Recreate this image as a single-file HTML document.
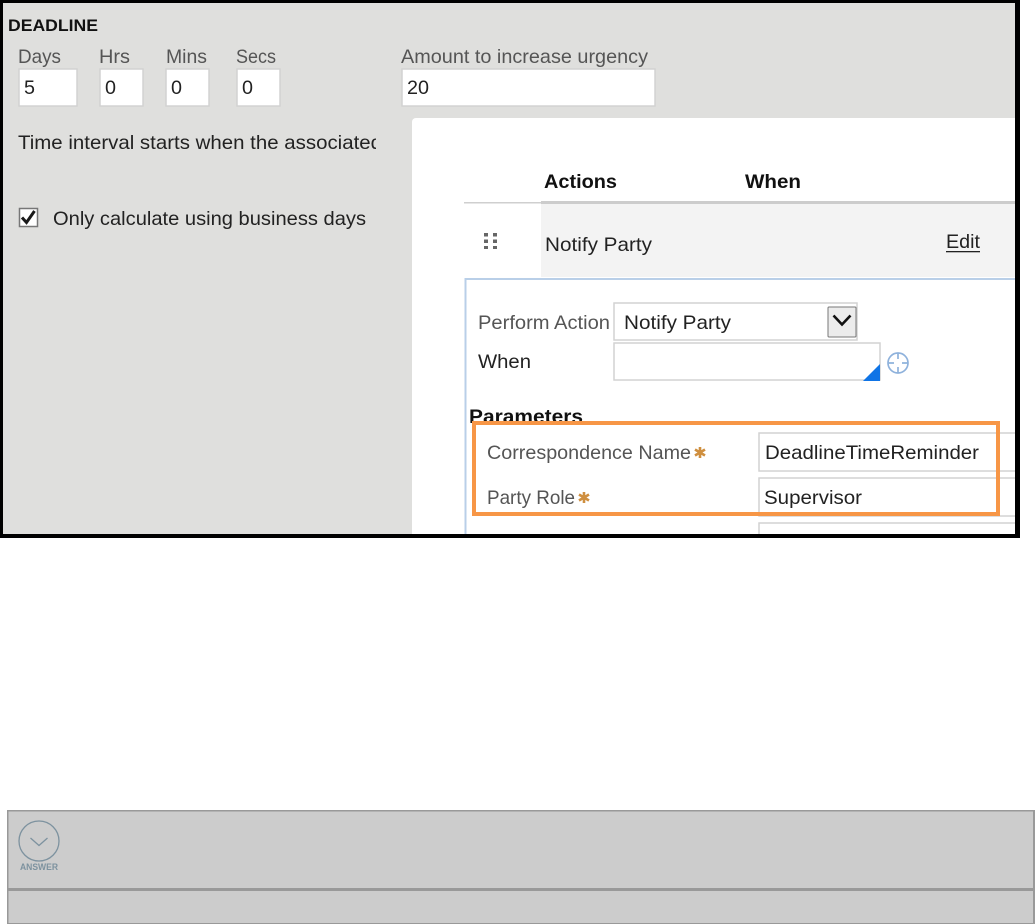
<!DOCTYPE html>
<html><head><meta charset="utf-8"><style>
html,body{margin:0;padding:0;background:#fff;width:1035px;height:924px;overflow:hidden}
svg{display:block}
text{font-family:"Liberation Sans",sans-serif;font-size:19.5px;fill:#333}
.d{fill:#222}
.b{font-weight:bold;fill:#111;font-size:19px}
.l{fill:#555}
.soft{filter:blur(.35px)}
</style></head><body>
<svg width="1035" height="924" viewBox="0 0 1035 924" xmlns="http://www.w3.org/2000/svg">
<defs><clipPath id="c"><rect x="3" y="3" width="1012" height="531"/></clipPath></defs>
<rect x="0" y="0" width="1020" height="538" fill="#000"/>
<rect x="3" y="3" width="1012" height="531" fill="#dfdfdd"/>
<g clip-path="url(#c)">
<g class="soft">
<text x="8" y="31" class="b" style="font-size:17px" textLength="90" lengthAdjust="spacingAndGlyphs">DEADLINE</text>
<text x="18" y="63" class="l" textLength="43" lengthAdjust="spacingAndGlyphs">Days</text>
<text x="99" y="63" class="l" textLength="31" lengthAdjust="spacingAndGlyphs">Hrs</text>
<text x="166" y="63" class="l" textLength="41" lengthAdjust="spacingAndGlyphs">Mins</text>
<text x="236" y="63" class="l" textLength="40" lengthAdjust="spacingAndGlyphs">Secs</text>
<text x="401" y="63" class="l" textLength="247" lengthAdjust="spacingAndGlyphs">Amount to increase urgency</text>
<g fill="#fff" stroke="#d2d2d2" stroke-width="1.5">
<rect x="19" y="69" width="58" height="37"/>
<rect x="100" y="69" width="43" height="37"/>
<rect x="166" y="69" width="43" height="37"/>
<rect x="237" y="69" width="43" height="37"/>
<rect x="402" y="69" width="253" height="37"/>
</g>
<text x="24" y="94" class="d" textLength="11" lengthAdjust="spacingAndGlyphs">5</text>
<text x="105" y="94" class="d" textLength="11" lengthAdjust="spacingAndGlyphs">0</text>
<text x="171" y="94" class="d" textLength="11" lengthAdjust="spacingAndGlyphs">0</text>
<text x="242" y="94" class="d" textLength="11" lengthAdjust="spacingAndGlyphs">0</text>
<text x="407" y="94" class="d" textLength="22" lengthAdjust="spacingAndGlyphs">20</text>
<svg x="18" y="130" width="358" height="30"><text x="0" y="19" class="d" textLength="364" lengthAdjust="spacingAndGlyphs">Time interval starts when the associated</text></svg>
<rect x="19.5" y="208.500" width="18" height="18" fill="#fff" stroke="#777" stroke-width="1.500"/>
<path d="M22 217.500l4.500 5 8-11.500" fill="none" stroke="#1a1a1a" stroke-width="3"/>
<text x="53" y="225" class="d" textLength="313" lengthAdjust="spacingAndGlyphs">Only calculate using business days</text>
<path d="M412 122a4 4 0 0 1 4-4H1015V534H412Z" fill="#fff"/>
<rect x="464" y="202" width="77" height="1.500" fill="#cfcfcf"/>
<rect x="541" y="203" width="474" height="74" fill="#f3f3f3"/>
<rect x="541" y="201" width="474" height="3" fill="#cccccc"/>
<text x="544" y="188" class="b" textLength="73" lengthAdjust="spacingAndGlyphs">Actions</text>
<text x="745" y="188" class="b" textLength="56" lengthAdjust="spacingAndGlyphs">When</text>
<g fill="#666"><rect x="484" y="233" width="4" height="3.500"/><rect x="493" y="233" width="4" height="3.500"/><rect x="484" y="239.500" width="4" height="3.500"/><rect x="493" y="239.500" width="4" height="3.500"/><rect x="484" y="246" width="4" height="3"/><rect x="493" y="246" width="4" height="3"/></g>
<text x="545" y="251" class="d" textLength="107" lengthAdjust="spacingAndGlyphs">Notify Party</text>
<text x="946" y="248" class="d" textLength="34" lengthAdjust="spacingAndGlyphs">Edit</text>
<rect x="946" y="251" width="34" height="1.300" fill="#222"/>
<path d="M465.500 534V279H1015" fill="none" stroke="#b9cfe8" stroke-width="2"/>
<text x="478" y="329" class="l" textLength="132" lengthAdjust="spacingAndGlyphs">Perform Action</text>
<text x="478" y="368" class="d" textLength="53" lengthAdjust="spacingAndGlyphs">When</text>
<rect x="614" y="303" width="243" height="37" fill="#fff" stroke="#d2d2d2" stroke-width="1.500"/>
<text x="624" y="329" class="d" textLength="107" lengthAdjust="spacingAndGlyphs">Notify Party</text>
<rect x="828" y="307" width="28" height="30" rx="1" fill="#ececec" stroke="#777" stroke-width="1"/>
<path d="M833.500 315.500l8.500 9 8.500-9" fill="none" stroke="#111" stroke-width="2.600"/>
<rect x="614" y="343" width="266" height="37" fill="#fff" stroke="#d2d2d2" stroke-width="1.500"/>
<path d="M880 364V381H863Z" fill="#0f74e6"/>
<g fill="none" stroke="#8fb2dc" stroke-width="1.700"><circle cx="898" cy="363" r="10"/><path d="M898 353v6M898 367v6M888 363h6M902 363h6"/></g>
<text x="469" y="423" class="b" textLength="114" lengthAdjust="spacingAndGlyphs">Parameters</text>
<rect x="476" y="425" width="520" height="87" fill="#fff"/>
<rect x="759" y="433" width="270" height="38" fill="#fff" stroke="#d2d2d2" stroke-width="1.500"/>
<rect x="759" y="478" width="270" height="38" fill="#fff" stroke="#d2d2d2" stroke-width="1.500"/>
<rect x="759" y="523" width="270" height="38" fill="#fff" stroke="#d2d2d2" stroke-width="1.500"/>
<text x="487" y="459" class="l" textLength="204" lengthAdjust="spacingAndGlyphs">Correspondence Name</text>
<text x="487" y="504" class="l" textLength="88" lengthAdjust="spacingAndGlyphs">Party Role</text>
<g fill="none" stroke="#cf8f3f" stroke-width="2.600"><path d="M700 447v11M695 449.500l10 6M705 449.500l-10 6"/><path d="M584 492v11M579 494.500l10 6M589 494.500l-10 6"/></g>
<text x="765" y="459" class="d" textLength="214" lengthAdjust="spacingAndGlyphs">DeadlineTimeReminder</text>
<text x="764" y="504" class="d" textLength="98" lengthAdjust="spacingAndGlyphs">Supervisor</text>
<rect x="474" y="423" width="524" height="91" fill="none" stroke="#f79646" stroke-width="4"/>
</g>
</g>
<rect x="7.500" y="810.500" width="1027" height="113" fill="#cccccc"/>
<rect x="7" y="810" width="1028" height="1.500" fill="#999"/>
<rect x="7" y="810" width="1.500" height="114" fill="#999"/>
<rect x="1033" y="810" width="2" height="114" fill="#999"/>
<rect x="7" y="888" width="1028" height="3" fill="#999"/>
<rect x="7" y="923" width="1028" height="1" fill="#999"/>
<g class="soft">
<circle cx="39" cy="841" r="20" fill="none" stroke="#7d929f" stroke-width="1.300"/>
<path d="M30.500 838l8.500 7.500 8.500-7.500" fill="none" stroke="#7d929f" stroke-width="1.300"/>
<text x="20" y="870" style="font-size:9.500px;font-weight:bold;fill:#7d929f" textLength="38" lengthAdjust="spacingAndGlyphs">ANSWER</text>
</g>
</svg>
</body></html>
